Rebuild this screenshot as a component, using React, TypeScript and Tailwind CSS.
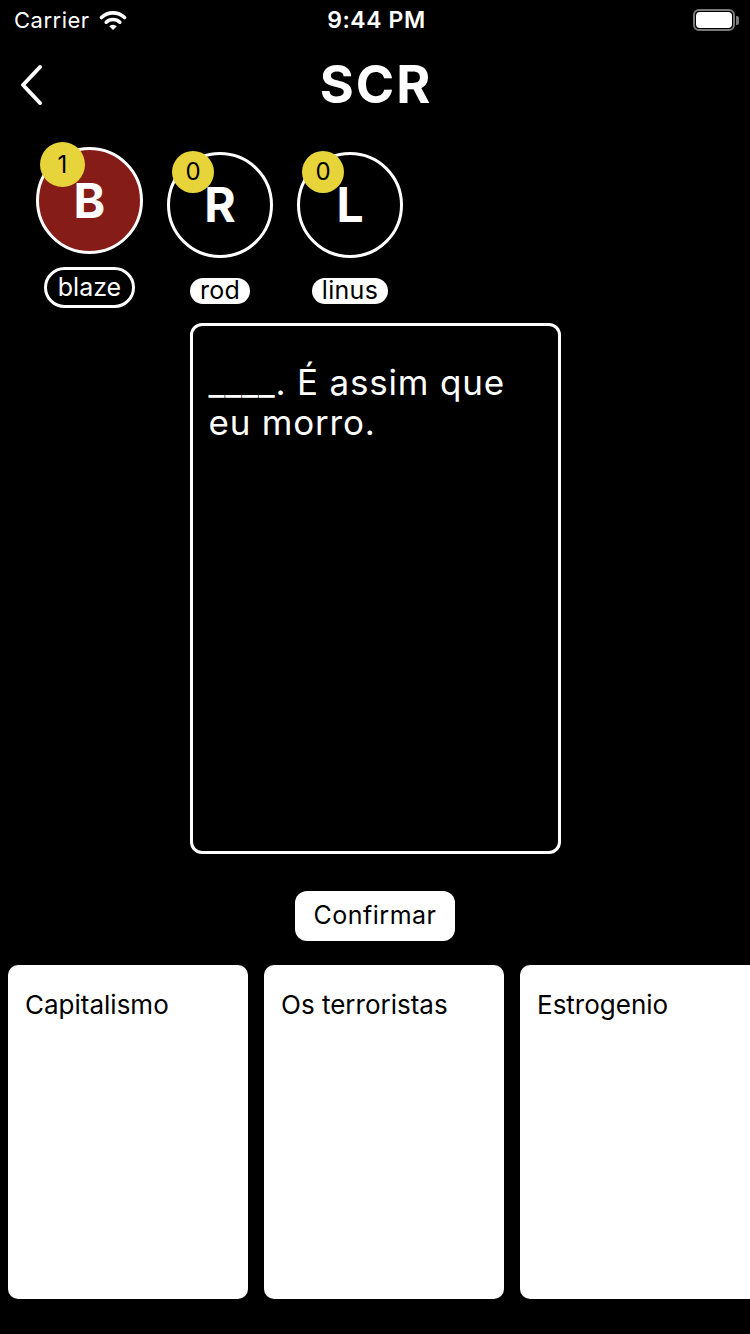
import React from 'react'

type Player = { initial: string; name: string; score: number; active?: boolean }

const players: Player[] = [
  { initial: 'B', name: 'blaze', score: 1, active: true },
  { initial: 'R', name: 'rod', score: 0 },
  { initial: 'L', name: 'linus', score: 0 },
]

const hand = ['Capitalismo', 'Os terroristas', 'Estrogenio']

function Wifi() {
  return (
    <svg width="28" height="22" viewBox="0 0 28 22" fill="none">
      <path d="M2.5 8.5 A16.5 16.5 0 0 1 25.5 8.5" stroke="white" strokeWidth="3.6" strokeLinecap="round" />
      <path d="M7.2 13.2 A9.8 9.8 0 0 1 20.8 13.2" stroke="white" strokeWidth="3.6" strokeLinecap="round" />
      <path d="M14 21 L10.2 17.2 A5.4 5.4 0 0 1 17.8 17.2 Z" fill="white" />
    </svg>
  )
}

function Battery() {
  return (
    <div className="flex items-center">
      <div className="w-[42px] h-[22px] rounded-[6px] border-2 border-[#7a7a7a] p-[1px]">
        <div className="w-full h-full rounded-[4px] bg-white" />
      </div>
      <div className="w-[3px] h-[9px] ml-[1px] rounded-r-[2px] bg-[#7a7a7a]" />
    </div>
  )
}

function PlayerItem({ p }: { p: Player }) {
  return (
    <div className="flex flex-col items-center">
      <div
        className={
          p.active
            ? 'relative w-[107px] h-[107px] rounded-full border-[3px] border-white bg-[#861c17] flex items-center justify-center'
            : 'relative w-[106px] h-[106px] rounded-full border-[3px] border-white bg-black flex items-center justify-center'
        }
      >
        <span className="text-[48px] font-bold text-white leading-none">{p.initial}</span>
        <div
          className={
            p.active
              ? 'absolute left-[1px] top-[-8px] w-[45px] h-[45px] rounded-full bg-[#e7d43b] flex items-center justify-center'
              : 'absolute left-[2px] top-[-4px] w-[42px] h-[42px] rounded-full bg-[#e7d43b] flex items-center justify-center'
          }
        >
          <span className="text-[24px] text-black leading-none">{p.score}</span>
        </div>
      </div>
      {p.active ? (
        <div className="mt-[13px] rounded-full border-[3px] border-white px-[11px] h-[41px] flex items-center">
          <span className="text-[25px] text-white leading-none">{p.name}</span>
        </div>
      ) : (
        <div className="mt-[20px] rounded-full bg-white px-[10px] h-[26px] flex items-center">
          <span className="text-[25px] text-black leading-none tracking-[0.3px]">{p.name}</span>
        </div>
      )}
    </div>
  )
}

export default function App() {
  return (
    <div
      className="w-[750px] h-[1334px] bg-black text-white overflow-hidden"
      style={{ fontFamily: 'Inter, "Noto Sans", sans-serif' }}
    >
      {/* status bar */}
      <div className="grid grid-cols-3 items-center h-[40px] pl-[14px] pr-[11px]">
        <div className="flex items-center gap-[9px]">
          <span className="text-[22px] leading-none tracking-[0.5px]">Carrier</span>
          <Wifi />
        </div>
        <div className="text-center text-[23px] font-semibold leading-none tracking-[0.6px]">9:44 PM</div>
        <div className="flex justify-end">
          <Battery />
        </div>
      </div>

      {/* nav */}
      <div className="grid grid-cols-[1fr_auto_1fr] items-center h-[90px] pl-[19px]">
        <svg width="25" height="42" viewBox="0 0 25 42" fill="none">
          <path d="M21 3 L4 21 L21 39" stroke="white" strokeWidth="4" strokeLinecap="round" strokeLinejoin="round" />
        </svg>
        <h1 className="text-[52px] font-bold leading-none tracking-[2px] pl-[2px] -ml-[19px]">SCR</h1>
        <div />
      </div>

      {/* players */}
      <div className="flex items-center gap-[24px] pl-[36px] mt-[17px]">
        {players.map((p) => (
          <PlayerItem key={p.name} p={p} />
        ))}
      </div>

      {/* black card */}
      <div className="mt-[15px] mx-auto w-[371px] h-[531px] rounded-[12px] border-[3px] border-white pl-[16px] pr-[26px] pt-[36px]">
        <p className="text-[35px] leading-[40px] tracking-[0.8px] text-white">____. É assim que eu morro.</p>
      </div>

      <div className="flex justify-center mt-[37px]">
        <button className="w-[160px] h-[50px] rounded-[12px] bg-white text-black text-[25px] tracking-[0.5px]">
          Confirmar
        </button>
      </div>

      {/* hand */}
      <div className="flex gap-[16px] pl-[8px] mt-[24px]">
        {hand.map((c) => (
          <div key={c} className="w-[240px] h-[334px] shrink-0 rounded-[10px] bg-white px-[17px] pt-[25px]">
            <p className="text-[26px] leading-[30px] text-black">{c}</p>
          </div>
        ))}
      </div>
    </div>
  )
}
